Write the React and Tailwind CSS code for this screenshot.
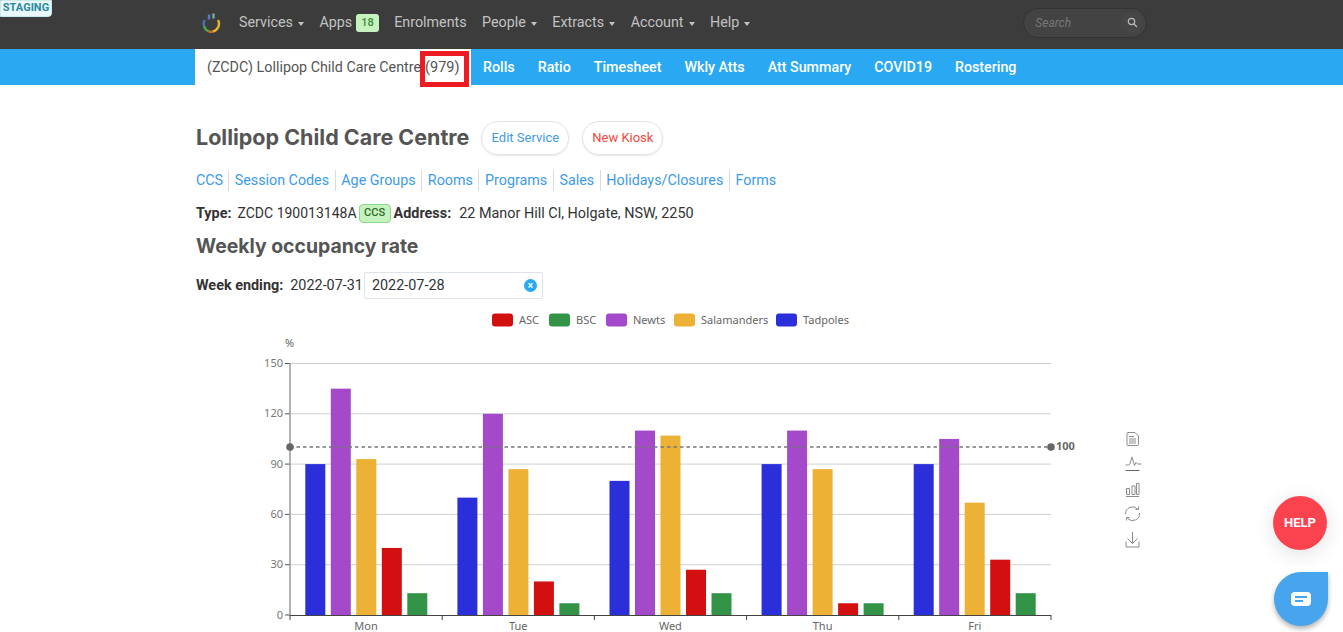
import React from 'react';

const roboto = { fontFamily: 'Roboto, sans-serif' };
const heading = { fontFamily: 'Inter, sans-serif' };

const NavItem = ({ label, caret = true }) => (
  <a className="flex items-center gap-[5px] text-[#c2c2c2]">
    {label}
    {caret && <span className="w-0 h-0 border-x-[3.5px] border-x-transparent border-t-[4px] border-t-[#c2c2c2] mt-[1px]" />}
  </a>
);

const days = [
  { name: 'Mon', vals: [90, 135, 93, 40, 13] },
  { name: 'Tue', vals: [70, 120, 87, 20, 7] },
  { name: 'Wed', vals: [80, 110, 107, 27, 13] },
  { name: 'Thu', vals: [90, 110, 87, 7, 7] },
  { name: 'Fri', vals: [90, 105, 67, 33, 13] },
];
const colors = ['#2a2fd9', '#a349c9', '#edb235', '#d31010', '#339347'];
const legend = [
  ['ASC', '#d31010', 492, 519],
  ['BSC', '#339347', 549, 576],
  ['Newts', '#a349c9', 606, 633],
  ['Salamanders', '#edb235', 674, 701],
  ['Tadpoles', '#2a2fd9', 776, 803],
];
const y0 = 615;
const yAt = (v) => y0 - (v * 251.5) / 150;

const Chart = () => (
  <svg width="960" height="327" viewBox="195 305 960 327" className="block" style={{ fontFamily: '"Noto Sans", sans-serif' }}>
    {legend.map(([name, c, x, tx]) => (
      <g key={name}>
        <rect x={x} y={313.5} width={21} height={13} rx={3} fill={c} />
        <text x={tx} y={323.5} fontSize="11" fill="#666">{name}</text>
      </g>
    ))}
    <text x="285" y="347" fontSize="11" fill="#666">%</text>
    {[30, 60, 90, 120, 150].map((v) => (
      <line key={v} x1="290" x2="1051" y1={yAt(v)} y2={yAt(v)} stroke="#d0d0d0" strokeWidth="1" />
    ))}
    {[0, 30, 60, 90, 120, 150].map((v) => (
      <g key={v}>
        <line x1="285" x2="290" y1={yAt(v)} y2={yAt(v)} stroke="#555" />
        <text x="283" y={yAt(v) + 3.5} fontSize="11" fill="#777" textAnchor="end">{v}</text>
      </g>
    ))}
    <line x1="290" x2="290" y1="363" y2="615" stroke="#999" strokeWidth="1.5" />
    {days.map((d, i) => (
      <g key={d.name}>
        {d.vals.map((v, j) => (
          <rect key={j} x={305.3 + i * 152.1 + j * 25.5} y={yAt(v)} width={20} height={y0 - yAt(v)} fill={colors[j]} />
        ))}
        <line x1={290 + i * 152.2} x2={290 + i * 152.2} y1="615" y2="620" stroke="#444" />
        <text x={366 + i * 152.2} y="629.500" fontSize="11" fill="#666" textAnchor="middle">{d.name}</text>
      </g>
    ))}
    <line x1="1051" x2="1051" y1="615" y2="620" stroke="#444" />
    <line x1="290" x2="1051" y1="615.5" y2="615.5" stroke="#444" strokeWidth="1.2" />
    <line x1="290" x2="1051" y1="447" y2="447" stroke="#777" strokeWidth="1.3" strokeDasharray="3.5 3" />
    <circle cx="290" cy="447" r="3.8" fill="#666" />
    <circle cx="1051" cy="447" r="3.8" fill="#666" />
    <text x="1056" y="449.5" fontSize="11" fontWeight="700" fill="#666">100</text>

    {/* toolbox icons */}
    <g fill="none" stroke="#8c8c8c" strokeWidth="1">
      <path d="M1128 432.5h7l3.5 3.500v8.500q0 1-1 1h-9.500q-1 0-1-1v-11q0-1 1-1z" />
      <path d="M1129 436.500h5M1129 439h7M1129 441h7M1129 443h7" />
      <path d="M1125.500 465h3l1.500-1 2-7 2.500 8.500 1.500-3 1.500 1.500h4" />
      <path d="M1125.500 470.500h14" stroke="#666" />
      <path d="M1126.500 488.500h3v6h-3zM1132 486h3v8.500h-3zM1136.500 483.500h2.500v11h-2.500z" />
      <path d="M1126 496.500h13" />
      <path d="M1125.500 514a7 7 0 0 1 12-5M1139.500 513a7 7 0 0 1-12 5.500" />
      <path d="M1135.500 509.500h3v-3M1129.500 517.500h-3v3" />
      <path d="M1132.500 532v11.500M1127.500 538.500l5 5 5-5" />
      <path d="M1126 541.500v5.500h13v-5.500" />
    </g>
  </svg>
);

const App = () => {
  return (
    <div className="relative h-[632px] overflow-hidden bg-white text-[14.4px] text-[#333]" style={roboto}>
      {/* Top nav */}
      <div className="h-[49px] bg-[#3c3c3c] flex items-center pl-[201px] pb-[3px] text-[14.3px]">
        <svg width="20" height="22" viewBox="0 0 20 22" className="mr-[18px]" fill="none" strokeWidth="2.4">
          <path d="M3.500 8a8 8 0 0 0-.5 6" stroke="#4b6fb5" />
          <path d="M3 14a8 8 0 0 0 5 5.500" stroke="#4fa64f" />
          <path d="M8 19.500a8 8 0 0 0 4 0" stroke="#d9652b" />
          <path d="M12 19.500a8 8 0 0 0 5-11.500" stroke="#e6b32e" />
          <path d="M8 2.500v5" stroke="#5d79b8" />
          <path d="M12.500 1.500v5" stroke="#6fb0a0" />
        </svg>
        <div className="flex items-center gap-[15.500px]">
          <NavItem label="Services" />
          <a className="flex items-center gap-[4px] text-[#c2c2c2]">
            Apps
            <span className="h-[18px] px-[5px] flex items-center rounded-[3px] bg-[#c6f2c0] text-[#3b8a35] text-[11px] font-medium">18</span>
          </a>
          <NavItem label="Enrolments" caret={false} />
          <NavItem label="People" />
          <NavItem label="Extracts" />
          <NavItem label="Account" />
          <NavItem label="Help" />
        </div>
        <div className="ml-[273px] w-[124px] h-[30px] rounded-full border border-[#333] bg-[#434343] flex items-center justify-between pl-[11px] pr-[3px]">
          <span className="text-[12px] italic text-[#777]">Search</span>
          <span className="w-[22px] h-[22px] rounded-full bg-[#464646] flex items-center justify-center">
            <svg width="11" height="11" viewBox="0 0 11 11" fill="none" stroke="#bbb" strokeWidth="1.2" className="mb-[2px]">
              <circle cx="4.500" cy="4.500" r="3.200" />
              <path d="M7 7l3 3" />
            </svg>
          </span>
        </div>
      </div>

      {/* Blue sub nav */}
      <div className="h-[36px] bg-[#2aa9f2] pl-[195px] flex items-stretch">
        <div className="bg-white w-[276px] pl-[12px] pt-[2px] flex items-center whitespace-nowrap text-[14.3px] text-[#555]">
          (ZCDC) Lollipop Child Care Centre<span className="ml-[4px] text-[14.5px]">(979)</span>
        </div>
        <div className="flex items-center gap-[23px] pl-[12px] pt-[2px] text-[14.25px] font-medium text-white">
          <a>Rolls</a>
          <a>Ratio</a>
          <a>Timesheet</a>
          <a>Wkly Atts</a>
          <a>Att Summary</a>
          <a>COVID19</a>
          <a>Rostering</a>
        </div>
      </div>

      {/* Page body */}
      <div className="pl-[195px]">
        <div className="flex items-center h-[34px] mt-[36px] pl-[1px]">
          <h1 className="text-[21.5px] font-bold text-[#555] pb-[2px]" style={heading}>Lollipop Child Care Centre</h1>
          <button className="ml-[12px] h-[34px] w-[88px] rounded-full border border-[#e3e3e3] shadow-[0_1px_2px_rgba(0,0,0,0.1)] text-[13px] text-[#3d9be9]">Edit Service</button>
          <button className="ml-[13px] h-[34px] w-[81px] rounded-full border border-[#e3e3e3] shadow-[0_1px_2px_rgba(0,0,0,0.1)] text-[13px] text-[#f0483e]">New Kiosk</button>
        </div>

        <div className="flex items-center mt-[15px] pl-[1px] text-[14.3px] text-[#3d9be9]">
          {['CCS', 'Session Codes', 'Age Groups', 'Rooms', 'Programs', 'Sales', 'Holidays/Closures', 'Forms'].map((t, i) => (
            <a key={t} className={i === 0 ? 'pr-[5px]' : 'px-[5.600px] border-l border-[#dcdcdc]'}>{t}</a>
          ))}
        </div>

        <div className="flex items-center mt-[12px] pl-[1px] h-[20px]">
          <b className="font-bold">Type:</b>
          <span className="ml-[6px] text-[14px]">ZCDC 190013148A</span>
          <span className="ml-[2px] h-[19px] w-[32px] flex items-center justify-center rounded-[4px] border border-[#8fd88a] bg-[#c6f2c0] text-[#2e6b2a] text-[11px] font-medium">CCS</span>
          <b className="ml-[3px] font-bold">Address:</b>
          <span className="ml-[8px]">22 Manor Hill Cl, Holgate, NSW, 2250</span>
        </div>

        <h2 className="mt-[11px] pl-[1px] text-[19.4px] font-bold text-[#555] leading-[24px]" style={heading}>Weekly occupancy rate</h2>

        <div className="flex items-center mt-[14px] pl-[1px] h-[27px]">
          <b className="font-bold">Week ending:</b>
          <span className="ml-[7px]">2022-07-31</span>
          <div className="ml-[1px] w-[179px] h-[27px] border border-[#dde3ea] rounded-[2px] flex items-center justify-between pl-[7px] pr-[5px]">
            <span>2022-07-28</span>
            <span className="w-[13px] h-[13px] rounded-full bg-[#2aa9f2] flex items-center justify-center text-white text-[10px] font-bold leading-none">×</span>
          </div>
        </div>

        <div className="mt-[6px]">
          <Chart />
        </div>
      </div>

      {/* Overlays */}
      <div className="absolute left-0 top-0 w-[52px] h-[17px] bg-[#e8f8fb] border border-[#c7eaf0] rounded-br-[4px] flex items-center justify-center text-[11px] font-bold text-[#2c8aa0]">STAGING</div>
      <div className="absolute left-[420px] top-[51px] w-[49px] h-[36px] border-[5px] border-[#ed1c24]" />
      <div className="absolute left-[1273px] top-[496px] w-[54px] h-[54px] rounded-full bg-[#fb4350] shadow-[0_4px_20px_rgba(0,0,0,0.12)] flex items-center justify-center text-white text-[13px] font-bold">HELP</div>
      <div className="absolute left-[1274px] top-[572px] w-[54px] h-[54px] rounded-full rounded-tr-[5px] bg-[#47a5ed] shadow-[0_3px_5px_rgba(0,0,0,0.3)] flex items-center justify-center">
        <svg width="22" height="16" viewBox="0 0 22 16">
          <rect x="1" y="1" width="20" height="14" rx="4" fill="#fff" />
          <rect x="5" y="5" width="12" height="2" fill="#47a5ed" />
          <rect x="5" y="9" width="8" height="2" fill="#47a5ed" />
        </svg>
      </div>
    </div>
  );
};

export default App;
